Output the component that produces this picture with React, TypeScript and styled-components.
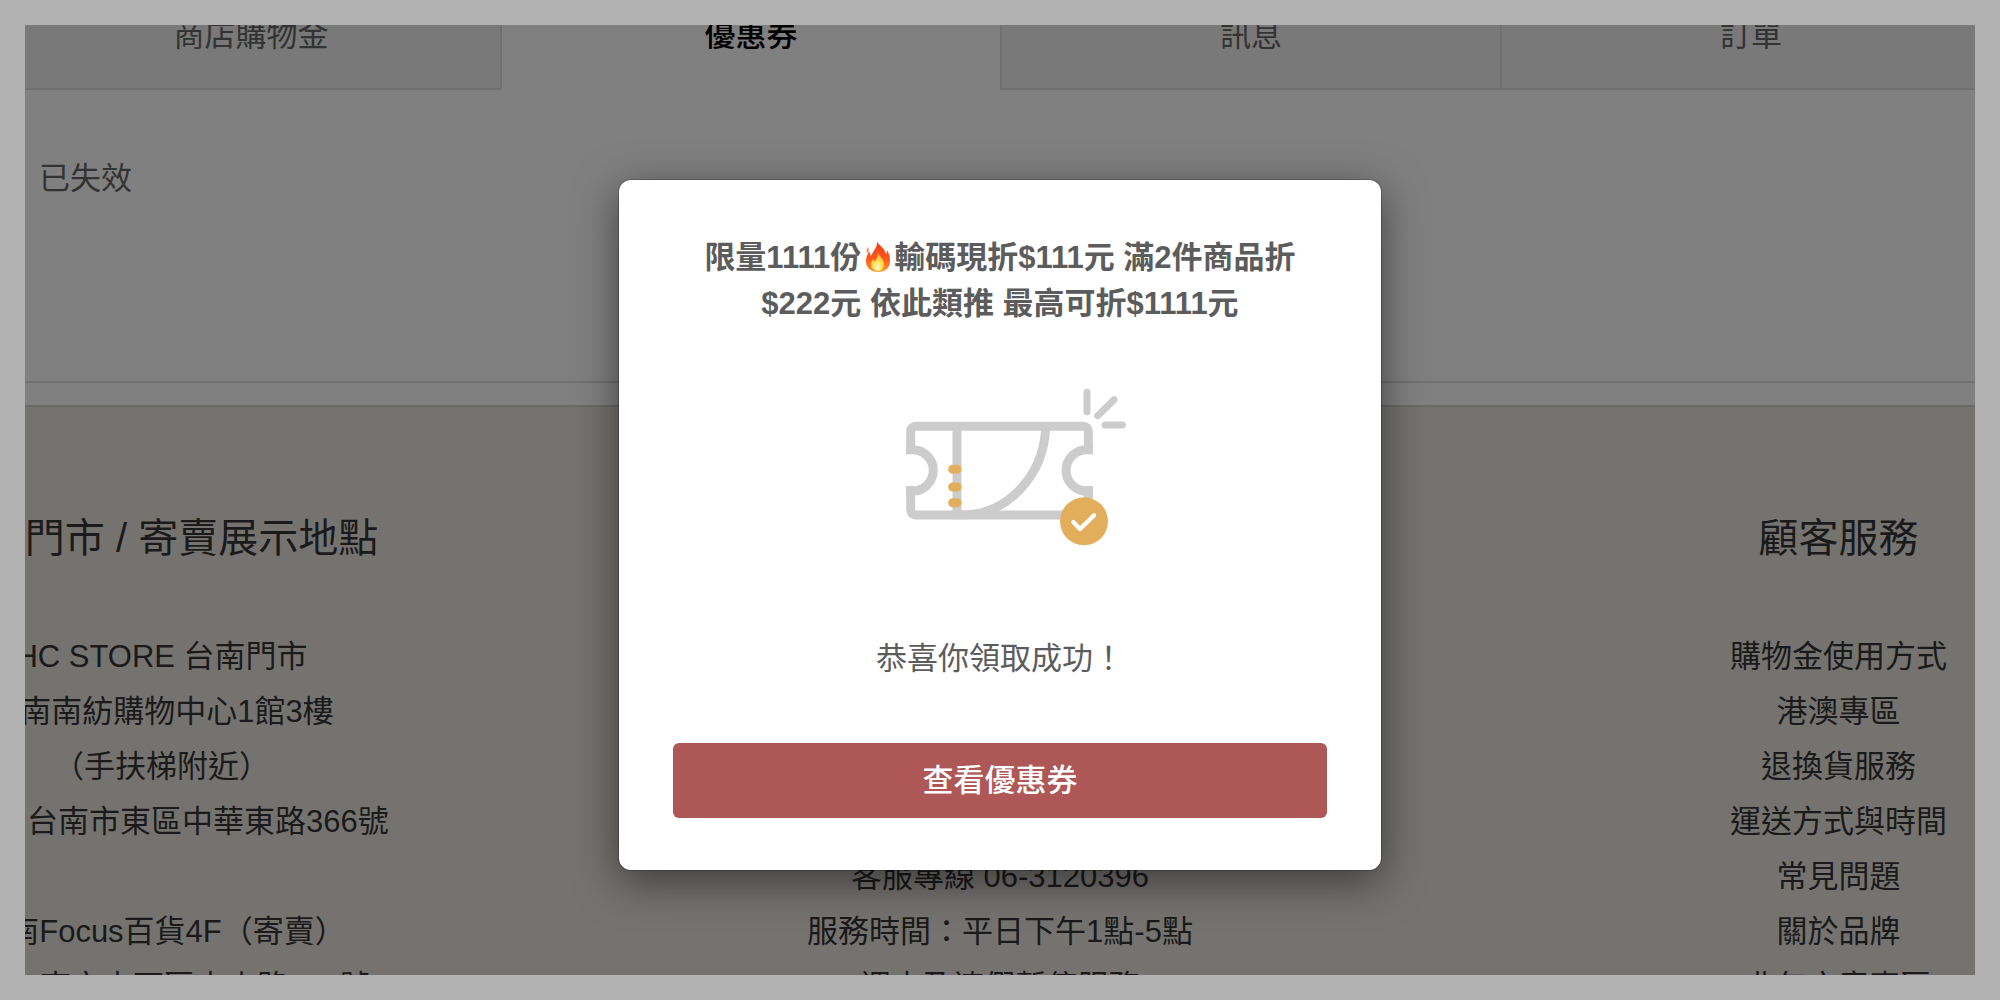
import React from "react";
import styled, { createGlobalStyle } from "styled-components";

const GlobalStyle = createGlobalStyle`
  *, *::before, *::after { box-sizing: border-box; }
  html, body, #root { height: 100%; }
  body {
    margin: 0;
    background: #b1b1b1;
    color: #333;
    font: 31px/46px "Liberation Sans", "Noto Sans CJK TC", sans-serif;
  }
`;

const Frame = styled.div`
  height: 100%;
  padding: 25px;
  background: #b1b1b1;
`;

const Screen = styled.div`
  position: relative;
  display: flex;
  flex-direction: column;
  height: 100%;
  overflow: hidden;
  background: #808080;
`;

const Tabs = styled.nav`
  flex: none;
  display: grid;
  grid-template-columns: repeat(4, 1fr);
  margin: -14px -25px 0;
`;

const Tab = styled.button<{ $active?: boolean }>`
  padding: 2px 0 29px;
  border: 0 solid #707070;
  border-width: 0 0 2px 2px;
  border-bottom-color: ${(p) => (p.$active ? "transparent" : "#707070")};
  background: ${(p) => (p.$active ? "transparent" : "#797979")};
  color: ${(p) => (p.$active ? "#000" : "#333")};
  font: inherit;
  font-weight: ${(p) => (p.$active ? 500 : 400)};
`;

const Panel = styled.main`
  flex: none;
  height: 293px;
  padding: 66px 14px;
  border-bottom: 2px solid #707070;
`;

const PanelText = styled.p`
  margin: 0;
`;

const Footer = styled.footer`
  flex: none;
  display: grid;
  grid-template-columns: repeat(3, 43%);
  justify-content: center;
  margin-top: 22px;
  padding-top: 96px;
  border-top: 2px solid #6b6a68;
  background: #757370;
  color: #1a1a1a;
  text-align: center;
`;

const Heading = styled.h2`
  height: 70px;
  margin: 0 0 56px;
  font-size: 40px;
  font-weight: 400;
  line-height: 70px;
  white-space: nowrap;
`;

const Lines = styled.ul`
  margin: 0;
  padding: 0;
  list-style: none;
  line-height: 55px;
  white-space: nowrap;
`;

const Line = styled.li`
  height: 55px;
`;

const FooterLink = styled.a`
  color: inherit;
  text-decoration: none;
`;

const Overlay = styled.div`
  position: absolute;
  inset: 0;
  display: flex;
  align-items: flex-start;
  justify-content: center;
  padding-top: 155px;
`;

const Dialog = styled.section`
  display: flex;
  flex-direction: column;
  align-items: center;
  width: 762px;
  padding: 55px 54px 52px;
  border-radius: 12px;
  background: #fff;
  color: #5c5c5c;
  text-align: center;
  box-shadow: 0 0 0 1px rgba(0, 0, 0, 0.2), 0 11px 44px rgba(0, 0, 0, 0.5);
`;

const Title = styled.h1`
  width: 600px;
  margin: 0;
  font-size: 31px;
  line-height: 46px;
`;

const Flame = styled.svg`
  width: 33px;
  height: 31px;
  vertical-align: -4px;
`;

const Ticket = styled.svg`
  width: 280px;
  height: 220px;
  margin-top: 33px;
`;

const Message = styled.p`
  margin: 56px 0 61px;
`;

const Action = styled.button`
  width: 100%;
  height: 75px;
  border: 0;
  border-radius: 6px;
  background: #ad5756;
  color: #fff;
  font: inherit;
  font-weight: 500;
`;

const tabs = ["商店購物金", "優惠券", "訊息", "訂單"];

const stores = [
  "HC STORE 台南門市",
  "台南南紡購物中心1館3樓",
  "（手扶梯附近）",
  "地址：台南市東區中華東路366號",
  "",
  "台南Focus百貨4F（寄賣）",
  "地址：台南市中西區中山路166號4F",
];

const contact = ["", "", "", "", "客服專線 06-3120396", "服務時間：平日下午1點-5點", "週末及連假暫停服務"];

const services = ["購物金使用方式", "港澳專區", "退換貨服務", "運送方式與時間", "常見問題", "關於品牌", "非年文章專區"];

function FlameIcon() {
  return (
    <Flame viewBox="0 0 31 31" role="img" aria-label="火">
      <defs>
        <linearGradient id="flame" x1="0" y1="0" x2="0" y2="1">
          <stop offset="0" stopColor="#f4361c" />
          <stop offset="0.6" stopColor="#ff5a1f" />
          <stop offset="1" stopColor="#ff9a2b" />
        </linearGradient>
        <radialGradient id="core" cx="0.5" cy="0.8" r="0.7">
          <stop offset="0" stopColor="#fffbd0" />
          <stop offset="0.5" stopColor="#ffe04a" />
          <stop offset="1" stopColor="#ffab2e" />
        </radialGradient>
      </defs>
      <path fill="url(#flame)" d="M15 0c1 4 8 7 9 13 1-1 1-3 1-4 2 3 3 7 3 11 0 7-5 11-12 11S4 27 4 20c0-4 2-7 3-10 1 2 1 4 2 5 2-5 7-9 6-15z" />
      <path fill="#ff7a2a" d="M6 6c1 2 1 4-1 6-1-2 0-4 1-6z" />
      <path fill="url(#core)" d="M16 11c0 4 6 6 6 12 0 5-3 7-6 7s-7-2-7-7c0-2 1-4 2-5 0 1 1 2 2 2 2-3 3-5 3-9z" />
    </Flame>
  );
}

function TicketIcon() {
  return (
    <Ticket viewBox="-60 0 840 660" fill="none" aria-hidden="true">
      <g stroke="#cccccc" strokeWidth="27">
        <path d="M92 282V216q0-17 17-17H608q17 0 17 17V282M625 378V465H109q-17 0-17-17V378" />
        <path d="M79 269H98a62 62 0 0 1 0 124H79M639 269H620a62 62 0 0 0 0 124H639M231 199V478M497 205C490 350 380 465 245 465" />
        <path strokeWidth="21" strokeLinecap="round" d="M621 97V155M653 167L702 119M675 195H727" />
      </g>
      <path d="M218 328H231M218 381H231M218 428H231" stroke="#e3ae5b" strokeWidth="27" strokeLinecap="round" />
      <circle cx="612" cy="484" r="72" fill="#e3ae5b" />
      <path d="M580 486L600 507L642 466" stroke="#fff" strokeWidth="13" strokeLinecap="round" strokeLinejoin="round" />
    </Ticket>
  );
}

export default function App() {
  return (
    <Frame>
      <GlobalStyle />
      <Screen>
        <Tabs>
          {tabs.map((label) => (
            <Tab key={label} type="button" $active={label === "優惠券"}>
              {label}
            </Tab>
          ))}
        </Tabs>
        <Panel>
          <PanelText>已失效</PanelText>
        </Panel>
        <Footer>
          <div>
            <Heading>實體門市 / 寄賣展示地點</Heading>
            <Lines>
              {stores.map((text, i) => (
                <Line key={i}>{text}</Line>
              ))}
            </Lines>
          </div>
          <div>
            <Heading />
            <Lines>
              {contact.map((text, i) => (
                <Line key={i}>{text}</Line>
              ))}
            </Lines>
          </div>
          <div>
            <Heading>顧客服務</Heading>
            <Lines>
              {services.map((text) => (
                <Line key={text}>
                  <FooterLink href="#">{text}</FooterLink>
                </Line>
              ))}
            </Lines>
          </div>
        </Footer>
        <Overlay>
          <Dialog role="dialog" aria-modal="true" aria-labelledby="dialog-title">
            <Title id="dialog-title">
              限量1111份
              <FlameIcon />
              輸碼現折$111元 滿2件商品折$222元 依此類推 最高可折$1111元
            </Title>
            <TicketIcon />
            <Message>恭喜你領取成功！</Message>
            <Action type="button">查看優惠券</Action>
          </Dialog>
        </Overlay>
      </Screen>
    </Frame>
  );
}
